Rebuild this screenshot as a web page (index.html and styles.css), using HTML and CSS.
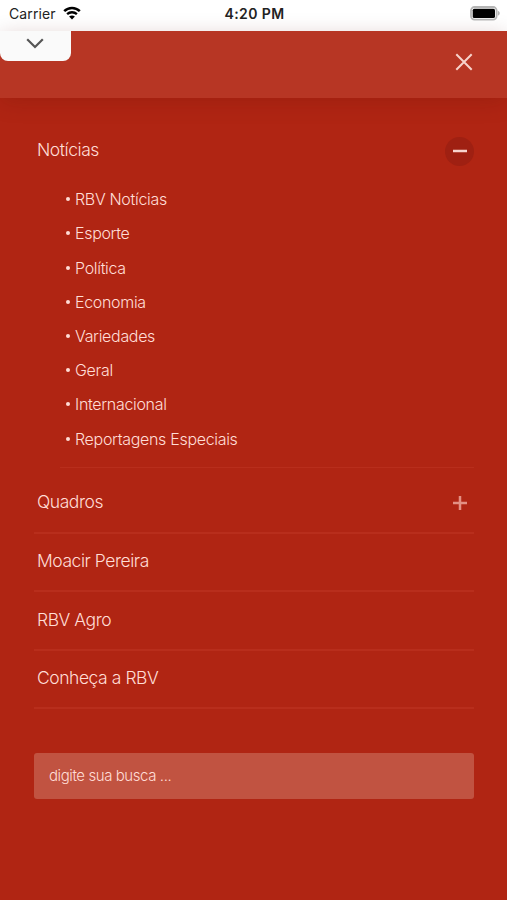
FILE: index.html
```
<!DOCTYPE html>
<html lang="pt-BR">
<head>
    <meta charset="UTF-8">
    <meta name="viewport" content="width=device-width, initial-scale=1.0">
    <title>RBV</title>
    <link rel="stylesheet" href="styles.css">
</head>
<body>
    <div class="status-bar">
        <div class="carrier">
            <span>Carrier</span>
            <svg class="wifi" viewBox="0 0 18 14" width="18" height="14">
                <path d="M1.2 5.2C5.6 .9 12.4 .9 16.8 5.2" fill="none" stroke="#000" stroke-width="2.5"/>
                <path d="M4.1 8.2c2.800-2.600 7-2.600 9.800 0" fill="none" stroke="#000" stroke-width="2.3"/>
                <path d="M9 13.600l-2.900-3.100c1.700-1.400 4.100-1.400 5.800 0z"/>
            </svg>
        </div>
        <div class="clock">4:20 PM</div>
        <svg class="battery" viewBox="0 0 30 15" width="30" height="15">
            <rect x="1" y="1" width="25.600" height="12.600" rx="3.500" fill="#fff" stroke="#b5b5b5" stroke-width="1.800"/>
            <rect x="2.700" y="2.700" width="22.300" height="9.300" rx="1.600"/>
            <path d="M27.800 4.800c2.600 1 2.600 4 0 5z" fill="#b5b5b5"/>
        </svg>
    </div>

    <header class="menu-header">
        <button class="pull-tab" aria-label="Recolher">
            <svg viewBox="0 0 18 11" width="18" height="11">
                <path d="M1.200 1.300L9 9l7.800-7.700" fill="none" stroke="#555" stroke-width="2.200"/>
            </svg>
        </button>
        <button class="close-btn" aria-label="Fechar">
            <svg viewBox="0 0 18 18" width="18" height="18">
                <path d="M1.300 1.300l15.400 15.400M16.700 1.300L1.300 16.700" stroke="#f7d3cb" stroke-width="2"/>
            </svg>
        </button>
    </header>

    <nav class="menu">
        <div class="menu-item open">
            <a>Notícias</a>
            <button class="toggle active" aria-label="Fechar Notícias">
                <svg viewBox="0 0 14 14" width="14" height="14"><path d="M0 7h14" stroke="#f8d5cf" stroke-width="2.500"/></svg>
            </button>
        </div>
        <ul class="submenu">
            <li><a>RBV Notícias</a></li>
            <li><a>Esporte</a></li>
            <li><a>Política</a></li>
            <li><a>Economia</a></li>
            <li><a>Variedades</a></li>
            <li><a>Geral</a></li>
            <li><a>Internacional</a></li>
            <li><a>Reportagens Especiais</a></li>
        </ul>
        <div class="menu-item">
            <a>Quadros</a>
            <button class="toggle" aria-label="Abrir Quadros">
                <svg viewBox="0 0 14 14" width="14" height="14"><path d="M0 7h14M7 0v14" stroke="#e39184" stroke-width="2.500"/></svg>
            </button>
        </div>
        <div class="menu-item"><a>Moacir Pereira</a></div>
        <div class="menu-item"><a>RBV Agro</a></div>
        <div class="menu-item"><a>Conheça a RBV</a></div>
    </nav>

    <form class="search">
        <input type="text" placeholder="digite sua busca ...">
    </form>
</body>
</html>
```
FILE: styles.css
```
* {
    box-sizing: border-box;
}
body {
    margin: 0;
    min-height: 900px;
    background: #b02513;
    font-family: Inter, "Liberation Sans", Arial, sans-serif;
    color: #ffddd6;
}
button {
    padding: 0;
    border: none;
    background: none;
}
svg {
    display: block;
}
.status-bar {
    display: grid;
    grid-template-columns: 1fr auto 1fr;
    align-items: center;
    height: 31px;
    padding: 0 7px 4px 9px;
    background: #fff;
    color: #222;
    font-size: 14px;
}
.carrier {
    display: flex;
    align-items: center;
    gap: 7px;
    letter-spacing: 0.1px;
}
.wifi {
    margin-bottom: 2px;
}
.clock {
    font-weight: 600;
    font-size: 14px;
    letter-spacing: 0.4px;
}
.battery {
    justify-self: end;
}
.menu-header {
    display: flex;
    justify-content: space-between;
    align-items: flex-start;
    height: 67px;
    padding-right: 34px;
    background: #b73624;
    box-shadow: 0 4px 22px rgba(90, 15, 5, 0.2);
}
.pull-tab {
    display: flex;
    justify-content: center;
    width: 71px;
    height: 30px;
    padding: 7px 1px 0 0;
    background: #fafafa;
    border-radius: 0 0 8px 8px;
}
.close-btn {
    margin-top: 22px;
}
.menu {
    padding: 24px 33px 0 34px;
}
.menu-item {
    display: flex;
    justify-content: space-between;
    align-items: center;
    height: 58.6px;
    padding: 0 0 2px 3px;
    border-bottom: 2px solid #b82e1c;
    font-size: 17.5px;
    font-weight: 300;
    letter-spacing: -0.45px;
}
.menu-item a {
    padding-bottom: 1px;
}
.menu-item.open {
    border-bottom: none;
}
.toggle {
    display: flex;
    align-items: center;
    justify-content: center;
    width: 29px;
    height: 29px;
    margin-top: 2px;
    border-radius: 50%;
}
.toggle.active {
    background: #9f2012;
}
.submenu {
    list-style: none;
    margin: 2px 0 7px 26px;
    padding: 0 0 11px 6px;
    border-bottom: 1px solid #b82e1c;
    font-size: 16px;
    font-weight: 300;
    letter-spacing: -0.32px;
}
.submenu li {
    display: flex;
    align-items: center;
    gap: 5px;
    height: 34.2px;
    padding-bottom: 1px;
}
.submenu li::before {
    content: "";
    width: 4px;
    height: 4px;
    border-radius: 50%;
    background: #ffddd6;
}
.search {
    margin: 44px 33px 0 34px;
}
.search input {
    display: block;
    width: 100%;
    height: 46px;
    padding: 0 15px 2px;
    border: none;
    border-radius: 3px;
    background: #c15341;
    color: #ffddd6;
    font-family: inherit;
    font-size: 15px;
    font-weight: 300;
    letter-spacing: -0.42px;
}
.search input::placeholder {
    color: #ffddd6;
    opacity: 1;
}
```
